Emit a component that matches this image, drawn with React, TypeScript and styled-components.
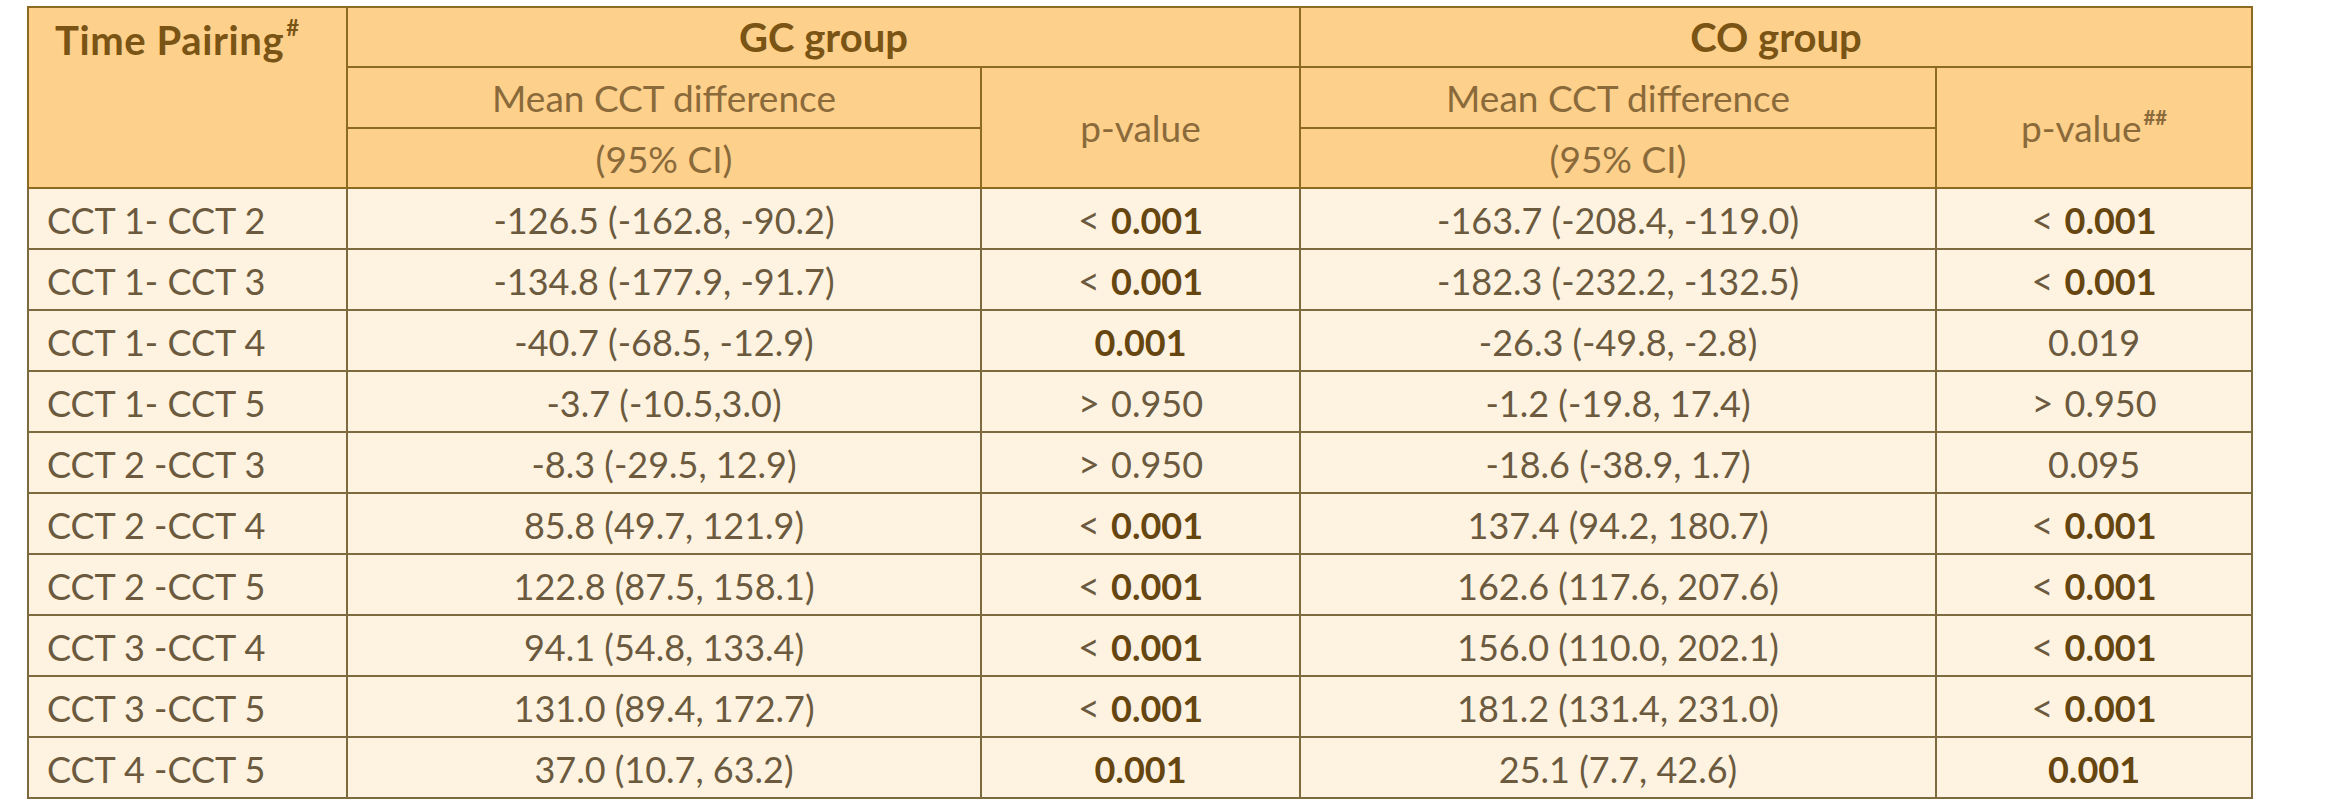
import React from "react";
import styled, { createGlobalStyle } from "styled-components";

const GlobalStyle = createGlobalStyle`
  html, body { margin: 0; padding: 0; background: #ffffff; }
  body { font-family: Lato, "Open Sans", sans-serif; }
`;

const Page = styled.div`
  width: 2326px;
  height: 800px;
  box-sizing: border-box;
  overflow: hidden;
  padding: 6px 0 0 27px;
`;

const Table = styled.table`
  border-collapse: collapse;
  table-layout: fixed;
  width: 2226px;
  border: 2px solid #8a7445;
`;

const HeadRow = styled.tr<{ $h: number }>`
  height: ${(p) => p.$h}px;
  background: #fdd08b;
`;

const BodyRow = styled.tr`
  height: 61px;
  background: #fef2e1;
`;

const GroupHead = styled.th`
  border: 2px solid #8c6a22;
  font-weight: 700;
  font-size: 40px;
  line-height: 1;
  color: #7a5414;
  text-align: center;
  vertical-align: middle;
  padding: 0;
`;

const PairHead = styled.th`
  border: 2px solid #8c6a22;
  font-weight: 700;
  font-size: 40px;
  line-height: 1;
  letter-spacing: 0.6px;
  color: #7a5414;
  text-align: left;
  vertical-align: top;
  padding: 12px 0 0 26px;
`;

const SubHead = styled.td`
  border: 2px solid #8c6a22;
  font-size: 37px;
  line-height: 1;
  color: #8a6a3a;
  text-align: center;
  vertical-align: middle;
  padding: 0;
`;

const Sup = styled.sup`
  font-size: 0.55em;
  font-weight: 700;
  line-height: 0;
  vertical-align: 0.85em;
  margin-left: 2px;
`;

const Cell = styled.td<{ $left?: boolean }>`
  border: 2px solid #7d6a3e;
  font-size: 36px;
  line-height: 1;
  color: #6b5a3e;
  text-align: ${(p) => (p.$left ? "left" : "center")};
  padding: ${(p) => (p.$left ? "3px 0 0 18px" : "3px 0 0")};
  vertical-align: middle;
  white-space: nowrap;
`;

const Op = styled.span`
  font-size: 1.05em;
  margin-right: 2px;
`;

const Strong = styled.b`
  font-weight: 700;
  color: #664610;
`;

type P = { op?: "<" | ">"; v: string; b?: boolean };
type Row = { pair: string; gc: string; gp: P; co: string; cp: P };

const lt: P = { op: "<", v: "0.001", b: true };

const rows: Row[] = [
  { pair: "CCT 1- CCT 2", gc: "-126.5 (-162.8, -90.2)", gp: lt, co: "-163.7 (-208.4, -119.0)", cp: lt },
  { pair: "CCT 1- CCT 3", gc: "-134.8 (-177.9, -91.7)", gp: lt, co: "-182.3 (-232.2, -132.5)", cp: lt },
  { pair: "CCT 1- CCT 4", gc: "-40.7 (-68.5, -12.9)", gp: { v: "0.001", b: true }, co: "-26.3 (-49.8, -2.8)", cp: { v: "0.019" } },
  { pair: "CCT 1- CCT 5", gc: "-3.7 (-10.5,3.0)", gp: { op: ">", v: "0.950" }, co: "-1.2 (-19.8, 17.4)", cp: { op: ">", v: "0.950" } },
  { pair: "CCT 2 -CCT 3", gc: "-8.3 (-29.5, 12.9)", gp: { op: ">", v: "0.950" }, co: "-18.6 (-38.9, 1.7)", cp: { v: "0.095" } },
  { pair: "CCT 2 -CCT 4", gc: "85.8 (49.7, 121.9)", gp: lt, co: "137.4 (94.2, 180.7)", cp: lt },
  { pair: "CCT 2 -CCT 5", gc: "122.8 (87.5, 158.1)", gp: lt, co: "162.6 (117.6, 207.6)", cp: lt },
  { pair: "CCT 3 -CCT 4", gc: "94.1 (54.8, 133.4)", gp: lt, co: "156.0 (110.0, 202.1)", cp: lt },
  { pair: "CCT 3 -CCT 5", gc: "131.0 (89.4, 172.7)", gp: lt, co: "181.2 (131.4, 231.0)", cp: lt },
  { pair: "CCT 4 -CCT 5", gc: "37.0 (10.7, 63.2)", gp: { v: "0.001", b: true }, co: "25.1 (7.7, 42.6)", cp: { v: "0.001", b: true } },
];

const PValue: React.FC<{ p: P }> = ({ p }) => (
  <>
    {p.op ? <Op>{p.op}</Op> : null}
    {p.op ? " " : ""}
    {p.b ? <Strong>{p.v}</Strong> : p.v}
  </>
);

export default function App() {
  return (
    <>
      <GlobalStyle />
      <Page>
        <Table>
          <colgroup>
            <col style={{ width: 319 }} />
            <col style={{ width: 634 }} />
            <col style={{ width: 319 }} />
            <col style={{ width: 636 }} />
            <col style={{ width: 316 }} />
          </colgroup>
          <thead>
            <HeadRow $h={60}>
              <PairHead rowSpan={3}>
                Time Pairing<Sup>#</Sup>
              </PairHead>
              <GroupHead colSpan={2}>GC group</GroupHead>
              <GroupHead colSpan={2}>CO group</GroupHead>
            </HeadRow>
            <HeadRow $h={61}>
              <SubHead>Mean CCT difference</SubHead>
              <SubHead rowSpan={2}>p-value</SubHead>
              <SubHead>Mean CCT difference</SubHead>
              <SubHead rowSpan={2}>
                p-value<Sup>##</Sup>
              </SubHead>
            </HeadRow>
            <HeadRow $h={60}>
              <SubHead>(95% CI)</SubHead>
              <SubHead>(95% CI)</SubHead>
            </HeadRow>
          </thead>
          <tbody>
            {rows.map((r) => (
              <BodyRow key={r.pair}>
                <Cell $left>{r.pair}</Cell>
                <Cell>{r.gc}</Cell>
                <Cell>
                  <PValue p={r.gp} />
                </Cell>
                <Cell>{r.co}</Cell>
                <Cell>
                  <PValue p={r.cp} />
                </Cell>
              </BodyRow>
            ))}
          </tbody>
        </Table>
      </Page>
    </>
  );
}
